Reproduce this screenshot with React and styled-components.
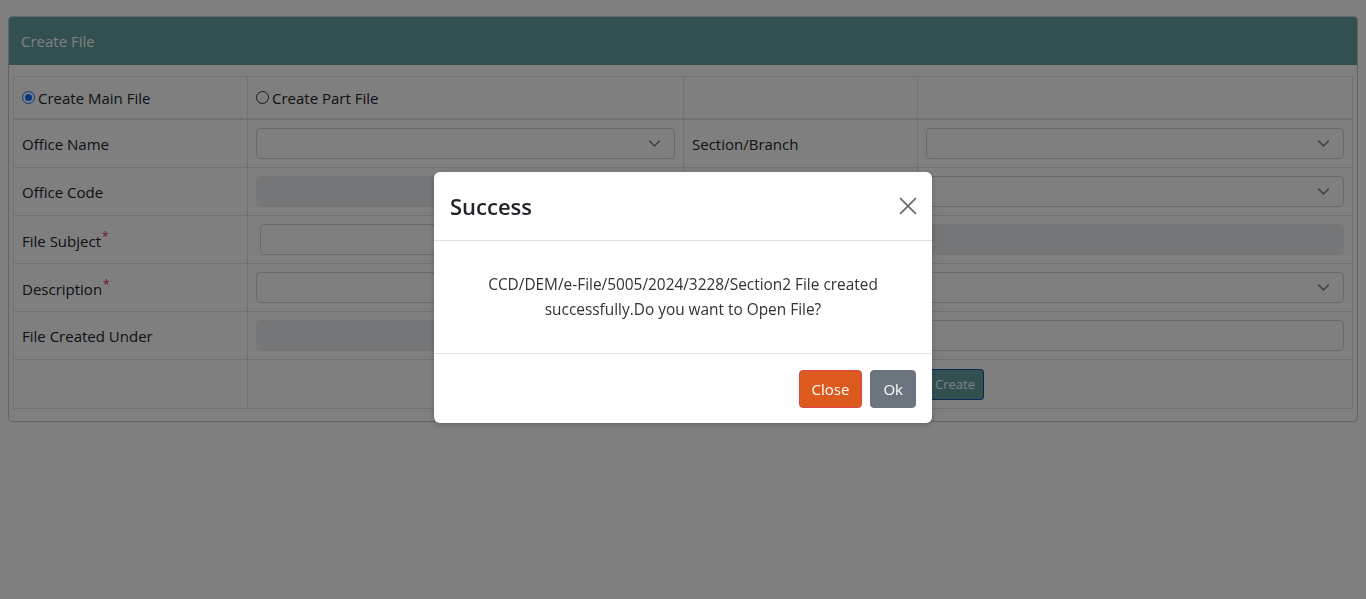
import React from "react";
import styled, { createGlobalStyle } from "styled-components";

const GlobalStyle = createGlobalStyle`
  html, body {
    margin: 0;
    padding: 0;
    background: #ffffff;
    font-family: "Open Sans", "Noto Sans", sans-serif;
    color: #212529;
  }
  * { box-sizing: border-box; }
`;

const Page = styled.div`
  padding: 16px 8px;
  min-height: 599px;
`;

const Card = styled.div`
  border: 1px solid #c4c8cc;
  border-radius: 4px;
  overflow: hidden;
`;

const CardHeader = styled.div`
  height: 48px;
  background: #64a19f;
  color: #ffffff;
  font-size: 15px;
  display: flex;
  align-items: center;
  padding: 0 12px;
`;

const CardBody = styled.div`
  padding: 11px 4px 12px;
`;

const Table = styled.div`
  display: grid;
  grid-template-columns: 234px 436px 234px 1fr;
  border: 1px solid #dee2e6;
`;

const Cell = styled.div`
  height: ${(p) => (p.$head ? "43px" : "48px")};
  border-right: 1px solid #dee2e6;
  border-bottom: ${(p) => (p.$head ? "2px" : "1px")} solid #dee2e6;
  padding: 0 8px;
  display: flex;
  align-items: center;
  font-size: 15px;
  &:nth-child(4n) { border-right: none; }
  &:nth-last-child(-n + 4) { border-bottom: none; }
`;

const Req = styled.sup`
  color: #dc3545;
  font-size: 12px;
  margin-left: 1px;
`;

const Label = styled.span`
  display: inline-flex;
  align-items: center;
`;

const Radio = styled.span`
  width: 13px;
  height: 13px;
  border-radius: 50%;
  border: 1px solid ${(p) => (p.$on ? "#0d6efd" : "#333")};
  margin: 0 3px 0 0;
  display: inline-flex;
  align-items: center;
  justify-content: center;
  &::after {
    content: "";
    width: 7px;
    height: 7px;
    border-radius: 50%;
    background: ${(p) => (p.$on ? "#0d6efd" : "transparent")};
  }
`;

const Field = styled.div`
  width: 100%;
  height: 31px;
  margin-left: ${(p) => (p.$inset ? "4px" : "0")};
  border: 1px solid ${(p) => (p.$disabled ? "#e9ecef" : "#ced4da")};
  border-radius: 4px;
  background: ${(p) => (p.$disabled ? "#e9ecef" : "#ffffff")};
  display: flex;
  align-items: center;
  justify-content: flex-end;
  padding-right: 13px;
`;

const Chevron = () => (
  <svg width="13" height="13" viewBox="0 0 16 16" fill="none">
    <path d="M2 5l6 6 6-6" stroke="#6c757d" strokeWidth="1.6" strokeLinecap="round" strokeLinejoin="round" />
  </svg>
);

const CreateBtn = styled.button`
  font-family: inherit;
  font-size: 13px;
  color: #ffffff;
  background: #64a19f;
  border: 1px solid #1e4fb0;
  border-radius: 3px;
  height: 31px;
  padding: 0 8px;
`;

const Backdrop = styled.div`
  position: fixed;
  inset: 0;
  background: rgba(0, 0, 0, 0.5);
  display: flex;
  justify-content: center;
  align-items: flex-start;
  padding-top: 172px;
`;

const Modal = styled.div`
  width: 498px;
  background: #ffffff;
  border-radius: 6px;
  box-shadow: 0 2px 6px rgba(0, 0, 0, 0.2);
`;

const ModalHeader = styled.div`
  height: 69px;
  border-bottom: 1px solid #dee2e6;
  display: flex;
  align-items: center;
  justify-content: space-between;
  padding: 0 14px 0 16px;
`;

const Title = styled.h5`
  margin: 0;
  font-size: 22px;
  font-weight: 600;
  color: #212529;
`;

const CloseX = styled.button`
  border: none;
  background: transparent;
  padding: 0;
  width: 20px;
  height: 20px;
  display: flex;
  align-items: center;
  justify-content: center;
`;

const ModalBody = styled.div`
  height: 113px;
  border-bottom: 1px solid #dee2e6;
  display: flex;
  align-items: center;
  justify-content: center;
  text-align: center;
  padding: 0 40px;
  font-size: 15.4px;
  line-height: 25px;
  color: #333;
`;

const ModalFooter = styled.div`
  height: 69px;
  display: flex;
  align-items: center;
  justify-content: flex-end;
  gap: 8px;
  padding: 0 16px;
`;

const Btn = styled.button`
  font-family: inherit;
  font-size: 15px;
  color: #ffffff;
  background: ${(p) => p.$bg};
  border: 1px solid ${(p) => p.$bd || p.$bg};
  border-radius: 4px;
  height: 38px;
  padding: 0 12px;
`;

export default function App() {
  return (
    <>
      <GlobalStyle />
      <Page>
        <Card>
          <CardHeader>Create File</CardHeader>
          <CardBody>
            <Table>
              <Cell $head>
                <Label><Radio $on />Create Main File</Label>
              </Cell>
              <Cell $head>
                <Label><Radio />Create Part File</Label>
              </Cell>
              <Cell $head />
              <Cell $head />

              <Cell>Office Name</Cell>
              <Cell><Field><Chevron /></Field></Cell>
              <Cell>Section/Branch</Cell>
              <Cell><Field><Chevron /></Field></Cell>

              <Cell>Office Code</Cell>
              <Cell><Field $disabled /></Cell>
              <Cell />
              <Cell><Field><Chevron /></Field></Cell>

              <Cell><span>File Subject<Req>*</Req></span></Cell>
              <Cell><Field $inset /></Cell>
              <Cell />
              <Cell><Field $disabled /></Cell>

              <Cell><span>Description<Req>*</Req></span></Cell>
              <Cell><Field><Chevron /></Field></Cell>
              <Cell />
              <Cell><Field><Chevron /></Field></Cell>

              <Cell>File Created Under</Cell>
              <Cell><Field $disabled /></Cell>
              <Cell />
              <Cell><Field /></Cell>

              <Cell />
              <Cell />
              <Cell />
              <Cell><CreateBtn>Create</CreateBtn></Cell>
            </Table>
          </CardBody>
        </Card>
      </Page>
      <Backdrop>
        <Modal>
          <ModalHeader>
            <Title>Success</Title>
            <CloseX aria-label="close">
              <svg width="18" height="18" viewBox="0 0 16 16">
                <path d="M1 1l14 14M15 1L1 15" stroke="#6c6c6c" strokeWidth="1.6" />
              </svg>
            </CloseX>
          </ModalHeader>
          <ModalBody>
            CCD/DEM/e-File/5005/2024/3228/Section2 File created successfully.Do you want to Open File?
          </ModalBody>
          <ModalFooter>
            <Btn $bg="#dc5a1e" $bd="#e0424a">Close</Btn>
            <Btn $bg="#6c757d">Ok</Btn>
          </ModalFooter>
        </Modal>
      </Backdrop>
    </>
  );
}
